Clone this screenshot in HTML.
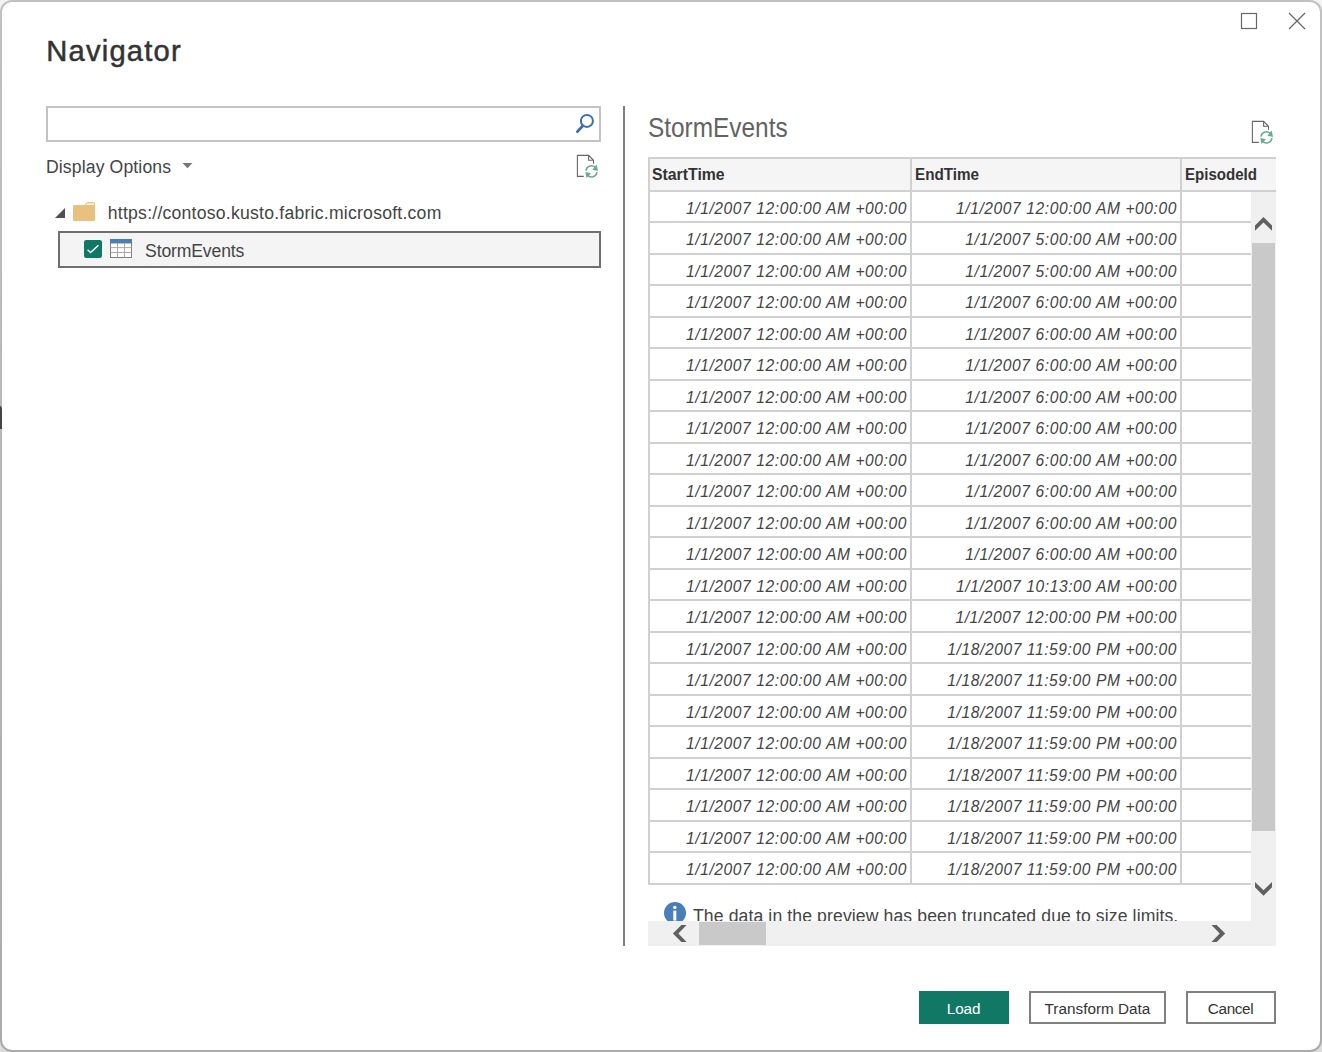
<!DOCTYPE html>
<html lang="en">
<head>
<meta charset="utf-8">
<title>Navigator</title>
<style>
  html, body { margin: 0; padding: 0; }
  body {
    width: 1322px; height: 1052px; overflow: hidden; position: relative;
    background: linear-gradient(to bottom, #f3f3f3 0%, #dcdcdc 100%);
    font-family: "Liberation Sans", sans-serif;
    color: #333;
  }
  .abs { position: absolute; }
  .t { position: absolute; white-space: nowrap; line-height: 1; transform-origin: 0 0; }
  #frame {
    position: absolute; left: 0; top: 0; width: 1322px; height: 1052px; box-sizing: border-box;
    border-radius: 12px;
    background: linear-gradient(to bottom, #c1c1c1 0%, #ababab 100%);
  }
  #win {
    position: absolute; left: 2px; top: 2px; width: 1318px; height: 1048px;
    border-radius: 10px; background: #fff; overflow: hidden;
  }
  /* everything inside #win is positioned in page coordinates via #page */
  #page { position: absolute; left: -2px; top: -2px; width: 1322px; height: 1052px; }

  #search { left: 46px; top: 106px; width: 555px; height: 36px; box-sizing: border-box; border: 2px solid #c3c3c3; background: #fff; }
  #divider { left: 623px; top: 106px; width: 2px; height: 840px; background: #808080; }
  #selrow { left: 58px; top: 231px; width: 543px; height: 37px; box-sizing: border-box; border: 2px solid #6f6f6f; background: #f4f4f4; }

  /* preview grid */
  .cell { position: absolute; white-space: nowrap; line-height: 1; font-size: 15.6px; letter-spacing: 0.58px; font-style: italic; color: #444; text-align: right; transform-origin: 100% 0; }
  .hd { position: absolute; white-space: nowrap; line-height: 1; font-weight: bold; color: #333; transform-origin: 0 0; }

  .btn { position: absolute; box-sizing: border-box; top: 991px; height: 33px; border: 2px solid #808080; background: #fff; }
</style>
</head>
<body>
<div id="frame"></div>
<div class="abs" style="left:0; top:406px; width:2px; height:23px; background:#444; border-top-right-radius:2px 4px; z-index:3;"></div>
<div id="win"><div id="page">

  <!-- title -->
  <span class="t" id="title" style="left:46.2px; top:36.5px; font-size:29.2px; color:#333; letter-spacing:1.2px; -webkit-text-stroke:0.5px #333;">Navigator</span>

  <!-- window buttons -->
  <svg class="abs" style="left:1236px; top:8px" width="76" height="26" viewBox="1236 8 76 26">
    <rect x="1241.5" y="13.5" width="15" height="15" fill="none" stroke="#666" stroke-width="1.2"/>
    <path d="M1289 13 L1305 29 M1305 13 L1289 29" stroke="#666" stroke-width="1.2" fill="none"/>
  </svg>

  <!-- search box -->
  <div class="abs" id="search"></div>
  <svg class="abs" style="left:572px; top:110px" width="26" height="26" viewBox="572 110 26 26">
    <circle cx="586.9" cy="120.9" r="6" fill="none" stroke="#3b6fb0" stroke-width="2"/>
    <path d="M582.6 126.0 L577.4 131.6" stroke="#3b6fb0" stroke-width="2.8" stroke-linecap="round" fill="none"/>
  </svg>

  <!-- display options -->
  <span class="t" id="dispopt" style="left:46px; top:158.5px; font-size:17.6px; letter-spacing:0.13px; color:#444;">Display Options</span>
  <svg class="abs" style="left:180px; top:160px" width="16" height="12" viewBox="180 160 16 12">
    <path d="M182.6 163 L192.4 163 L187.5 168.2 Z" fill="#777"/>
  </svg>

  <!-- divider -->
  <div class="abs" id="divider"></div>


  <!-- refresh icon (left) -->
  <svg class="abs" style="left:575px; top:153px" width="26" height="28" viewBox="575 153 26 28"><g transform="translate(577.4 155.4)">
      <path d="M6.4 21 H0 V0 H11.2 L16.1 4.9 V8.4 M11.2 0 V4.9 H16.1" fill="none" stroke="#666" stroke-width="1.1" stroke-linejoin="miter"/>
      <path d="M8.6 15.2 A5.5 5.5 0 0 1 18.4 12.6" fill="none" stroke="#6aaa92" stroke-width="1.6"/>
      <path d="M19.3 9.2 L20.6 15.6 L14.9 14.3 Z" fill="#6aaa92"/>
      <path d="M19.6 16.8 A5.5 5.5 0 0 1 9.8 19.4" fill="none" stroke="#6aaa92" stroke-width="1.6"/>
      <path d="M7.9 16.7 L13.6 17.9 L9.1 22.6 Z" fill="#6aaa92"/>
    </g></svg>

  <!-- tree -->
  <svg class="abs" style="left:52px; top:200px" width="48" height="24" viewBox="52 200 48 24">
    <path d="M65 208 L65 218 L55 218 Z" fill="#505050"/>
    <path d="M73 206.2 Q73 205 74.2 205 L84.6 205 L86.6 202.6 Q87.1 202 88 202 L93.8 202 Q95 202 95 203.2 L95 219.8 Q95 221 93.8 221 L74.2 221 Q73 221 73 219.8 Z" fill="#e8c17e"/>
    <path d="M85.8 205 L87.4 203.2 L94 203.2 L94 205 Z" fill="#fbf3e2"/>
  </svg>
  <span class="t" id="url" style="left:107.8px; top:204.9px; font-size:17.6px; letter-spacing:0.24px; color:#444;">https://contoso.kusto.fabric.microsoft.com</span>

  <div class="abs" id="selrow"></div>
  <svg class="abs" style="left:82px; top:237px" width="54" height="24" viewBox="82 237 54 24">
    <rect x="84" y="240" width="18" height="18" rx="2.2" fill="#117865"/>
    <path d="M87.6 249.8 L90.6 252.5 L98.4 245.3" fill="none" stroke="#fff" stroke-width="1.4"/>
    <rect x="110.5" y="243" width="21" height="14.5" fill="#fff" stroke="#7f7f7f" stroke-width="1"/>
    <path d="M117.5 243 V257.5 M124.5 243 V257.5 M110.5 247.6 H131.5 M110.5 252.5 H131.5" stroke="#a8a8a8" stroke-width="1" fill="none"/>
    <rect x="110" y="239" width="22" height="4" fill="#4a7ebb"/>
  </svg>
  <span class="t" id="se1" style="left:145.1px; top:242.5px; font-size:17.6px; letter-spacing:-0.15px; color:#444;">StormEvents</span>

  <!-- preview title -->
  <span class="t" id="ptitle" style="left:648.4px; top:114.2px; font-size:27.2px; color:#636363; transform:scaleX(0.897);">StormEvents</span>
  <svg class="abs" style="left:1250px; top:119px" width="26" height="28" viewBox="1250 119 26 28"><g transform="translate(1252.4 121.4)">
      <path d="M6.4 21 H0 V0 H11.2 L16.1 4.9 V8.4 M11.2 0 V4.9 H16.1" fill="none" stroke="#666" stroke-width="1.1" stroke-linejoin="miter"/>
      <path d="M8.6 15.2 A5.5 5.5 0 0 1 18.4 12.6" fill="none" stroke="#6aaa92" stroke-width="1.6"/>
      <path d="M19.3 9.2 L20.6 15.6 L14.9 14.3 Z" fill="#6aaa92"/>
      <path d="M19.6 16.8 A5.5 5.5 0 0 1 9.8 19.4" fill="none" stroke="#6aaa92" stroke-width="1.6"/>
      <path d="M7.9 16.7 L13.6 17.9 L9.1 22.6 Z" fill="#6aaa92"/>
    </g></svg>

  <!-- preview grid -->
  <div class="abs" style="left:650px; top:159px; width:626px; height:31px; background:#f5f5f5;"></div>
  <div class="abs" style="left:648px; top:157px; width:628px; height:2px; background:#d0d0d0;"></div>
  <div class="abs" style="left:648px; top:190px; width:628px; height:2px; background:#d0d0d0;"></div>
  <div class="abs" style="left:648px; top:221px; width:603px; height:2px; background:#d0d0d0;"></div>
  <div class="abs" style="left:648px; top:253px; width:603px; height:2px; background:#d0d0d0;"></div>
  <div class="abs" style="left:648px; top:284px; width:603px; height:2px; background:#d0d0d0;"></div>
  <div class="abs" style="left:648px; top:316px; width:603px; height:2px; background:#d0d0d0;"></div>
  <div class="abs" style="left:648px; top:347px; width:603px; height:2px; background:#d0d0d0;"></div>
  <div class="abs" style="left:648px; top:379px; width:603px; height:2px; background:#d0d0d0;"></div>
  <div class="abs" style="left:648px; top:410px; width:603px; height:2px; background:#d0d0d0;"></div>
  <div class="abs" style="left:648px; top:442px; width:603px; height:2px; background:#d0d0d0;"></div>
  <div class="abs" style="left:648px; top:473px; width:603px; height:2px; background:#d0d0d0;"></div>
  <div class="abs" style="left:648px; top:505px; width:603px; height:2px; background:#d0d0d0;"></div>
  <div class="abs" style="left:648px; top:536px; width:603px; height:2px; background:#d0d0d0;"></div>
  <div class="abs" style="left:648px; top:568px; width:603px; height:2px; background:#d0d0d0;"></div>
  <div class="abs" style="left:648px; top:599px; width:603px; height:2px; background:#d0d0d0;"></div>
  <div class="abs" style="left:648px; top:631px; width:603px; height:2px; background:#d0d0d0;"></div>
  <div class="abs" style="left:648px; top:662px; width:603px; height:2px; background:#d0d0d0;"></div>
  <div class="abs" style="left:648px; top:694px; width:603px; height:2px; background:#d0d0d0;"></div>
  <div class="abs" style="left:648px; top:725px; width:603px; height:2px; background:#d0d0d0;"></div>
  <div class="abs" style="left:648px; top:757px; width:603px; height:2px; background:#d0d0d0;"></div>
  <div class="abs" style="left:648px; top:788px; width:603px; height:2px; background:#d0d0d0;"></div>
  <div class="abs" style="left:648px; top:820px; width:603px; height:2px; background:#d0d0d0;"></div>
  <div class="abs" style="left:648px; top:851px; width:603px; height:2px; background:#d0d0d0;"></div>
  <div class="abs" style="left:648px; top:883px; width:603px; height:2px; background:#d0d0d0;"></div>
  <div class="abs" style="left:648px; top:157px; width:2px; height:728px; background:#d0d0d0;"></div>
  <div class="abs" style="left:910px; top:157px; width:2px; height:728px; background:#d0d0d0;"></div>
  <div class="abs" style="left:1180px; top:157px; width:2px; height:728px; background:#d0d0d0;"></div>
  <span class="hd" id="h1" style="transform:scaleX(0.93); left:652px; top:165.6px; font-size:17px;">StartTime</span>
  <span class="hd" id="h2" style="transform:scaleX(0.896); left:915px; top:165.6px; font-size:17px;">EndTime</span>
  <span class="hd" id="h3" style="transform:scaleX(0.886); left:1185px; top:165.6px; font-size:17px;">EpisodeId</span>
  <span class="cell c1" style="right:415px; top:200.6px;">1/1/2007 12:00:00 AM +00:00</span><span class="cell c2" style="right:145px; top:200.6px;">1/1/2007 12:00:00 AM +00:00</span>
  <span class="cell c1" style="right:415px; top:231.6px;">1/1/2007 12:00:00 AM +00:00</span><span class="cell c2" style="right:145px; top:231.6px;">1/1/2007 5:00:00 AM +00:00</span>
  <span class="cell c1" style="right:415px; top:263.6px;">1/1/2007 12:00:00 AM +00:00</span><span class="cell c2" style="right:145px; top:263.6px;">1/1/2007 5:00:00 AM +00:00</span>
  <span class="cell c1" style="right:415px; top:294.6px;">1/1/2007 12:00:00 AM +00:00</span><span class="cell c2" style="right:145px; top:294.6px;">1/1/2007 6:00:00 AM +00:00</span>
  <span class="cell c1" style="right:415px; top:326.6px;">1/1/2007 12:00:00 AM +00:00</span><span class="cell c2" style="right:145px; top:326.6px;">1/1/2007 6:00:00 AM +00:00</span>
  <span class="cell c1" style="right:415px; top:357.6px;">1/1/2007 12:00:00 AM +00:00</span><span class="cell c2" style="right:145px; top:357.6px;">1/1/2007 6:00:00 AM +00:00</span>
  <span class="cell c1" style="right:415px; top:389.6px;">1/1/2007 12:00:00 AM +00:00</span><span class="cell c2" style="right:145px; top:389.6px;">1/1/2007 6:00:00 AM +00:00</span>
  <span class="cell c1" style="right:415px; top:420.6px;">1/1/2007 12:00:00 AM +00:00</span><span class="cell c2" style="right:145px; top:420.6px;">1/1/2007 6:00:00 AM +00:00</span>
  <span class="cell c1" style="right:415px; top:452.6px;">1/1/2007 12:00:00 AM +00:00</span><span class="cell c2" style="right:145px; top:452.6px;">1/1/2007 6:00:00 AM +00:00</span>
  <span class="cell c1" style="right:415px; top:483.6px;">1/1/2007 12:00:00 AM +00:00</span><span class="cell c2" style="right:145px; top:483.6px;">1/1/2007 6:00:00 AM +00:00</span>
  <span class="cell c1" style="right:415px; top:515.6px;">1/1/2007 12:00:00 AM +00:00</span><span class="cell c2" style="right:145px; top:515.6px;">1/1/2007 6:00:00 AM +00:00</span>
  <span class="cell c1" style="right:415px; top:546.6px;">1/1/2007 12:00:00 AM +00:00</span><span class="cell c2" style="right:145px; top:546.6px;">1/1/2007 6:00:00 AM +00:00</span>
  <span class="cell c1" style="right:415px; top:578.6px;">1/1/2007 12:00:00 AM +00:00</span><span class="cell c2" style="right:145px; top:578.6px;">1/1/2007 10:13:00 AM +00:00</span>
  <span class="cell c1" style="right:415px; top:609.6px;">1/1/2007 12:00:00 AM +00:00</span><span class="cell c2" style="right:145px; top:609.6px;">1/1/2007 12:00:00 PM +00:00</span>
  <span class="cell c1" style="right:415px; top:641.6px;">1/1/2007 12:00:00 AM +00:00</span><span class="cell c2" style="right:145px; top:641.6px;">1/18/2007 11:59:00 PM +00:00</span>
  <span class="cell c1" style="right:415px; top:672.6px;">1/1/2007 12:00:00 AM +00:00</span><span class="cell c2" style="right:145px; top:672.6px;">1/18/2007 11:59:00 PM +00:00</span>
  <span class="cell c1" style="right:415px; top:704.6px;">1/1/2007 12:00:00 AM +00:00</span><span class="cell c2" style="right:145px; top:704.6px;">1/18/2007 11:59:00 PM +00:00</span>
  <span class="cell c1" style="right:415px; top:735.6px;">1/1/2007 12:00:00 AM +00:00</span><span class="cell c2" style="right:145px; top:735.6px;">1/18/2007 11:59:00 PM +00:00</span>
  <span class="cell c1" style="right:415px; top:767.6px;">1/1/2007 12:00:00 AM +00:00</span><span class="cell c2" style="right:145px; top:767.6px;">1/18/2007 11:59:00 PM +00:00</span>
  <span class="cell c1" style="right:415px; top:798.6px;">1/1/2007 12:00:00 AM +00:00</span><span class="cell c2" style="right:145px; top:798.6px;">1/18/2007 11:59:00 PM +00:00</span>
  <span class="cell c1" style="right:415px; top:830.6px;">1/1/2007 12:00:00 AM +00:00</span><span class="cell c2" style="right:145px; top:830.6px;">1/18/2007 11:59:00 PM +00:00</span>
  <span class="cell c1" style="right:415px; top:861.6px;">1/1/2007 12:00:00 AM +00:00</span><span class="cell c2" style="right:145px; top:861.6px;">1/18/2007 11:59:00 PM +00:00</span>
  <svg class="abs" style="left:662px; top:900px" width="26" height="26" viewBox="662 900 26 26"><circle cx="675" cy="913" r="11" fill="#4a7ebb"/><circle cx="674.8" cy="907.4" r="1.7" fill="#fff"/><rect x="673.3" y="910.6" width="3" height="10" fill="#fff"/></svg>
  <span class="t" id="msg" style="left:693px; top:907.9px; font-size:17.6px; letter-spacing:0.115px; color:#444;">The data in the preview has been truncated due to size limits.</span>
  <div class="abs" style="left:1251px; top:192px; width:25px; height:754px; background:#f0f0f0;"></div>
  <div class="abs" style="left:648px; top:921px; width:628px; height:25px; background:#f0f0f0;"></div>
  <div class="abs" style="left:1252px; top:243px; width:23px; height:588px; background:#c9c9c9;"></div>
  <div class="abs" style="left:699px; top:922px; width:67px; height:23px; background:#c9c9c9;"></div>
  <svg class="abs" style="left:648px; top:192px" width="628" height="754" viewBox="648 192 628 754">
    <path d="M1263.5 217 L1272 225.5 V230.8 L1263.5 222.5 L1255 230.8 V225.5 Z" fill="#606060"/>
    <path d="M1263.5 895.8 L1272 887.3 V882 L1263.5 890.3 L1255 882 V887.3 Z" fill="#606060"/>
    <path d="M672.9 933.5 L681.4 925.1 H686.6 L678.4 933.5 L686.6 942 H681.4 Z" fill="#606060"/>
    <path d="M1225.2 933.5 L1216.7 925.1 H1211.5 L1219.7 933.5 L1211.5 942 H1216.7 Z" fill="#606060"/>
  </svg>

  <!-- buttons -->
  <div class="btn" style="left:919px; width:90px; background:#117865; border-color:#117865;"></div>
  <span class="t" id="bload" style="left:946.8px; top:1001.1px; font-size:15.3px; letter-spacing:-0.1px; color:#fff;">Load</span>
  <div class="btn" style="left:1029px; width:137px;"></div>
  <span class="t" id="btrans" style="left:1044.6px; top:1001.1px; font-size:15.3px; letter-spacing:0px; color:#333;">Transform Data</span>
  <div class="btn" style="left:1186px; width:90px;"></div>
  <span class="t" id="bcancel" style="left:1207.8px; top:1001.1px; font-size:15.3px; letter-spacing:-0.35px; color:#333;">Cancel</span>


</div></div>
</body>
</html>
